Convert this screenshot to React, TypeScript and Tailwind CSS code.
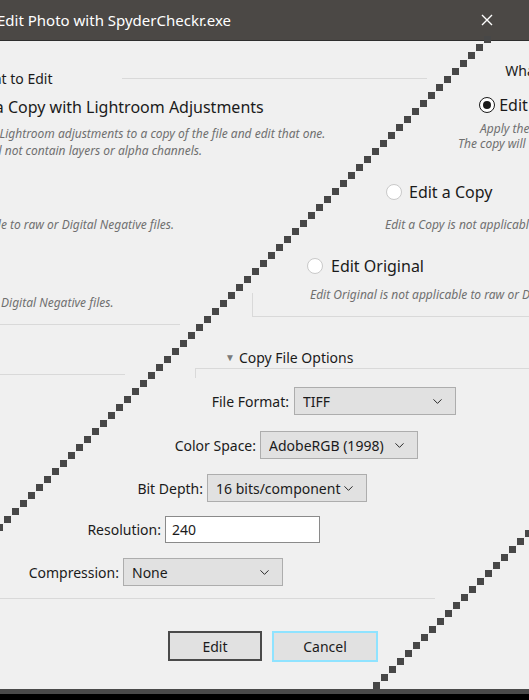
import { ChevronDown } from 'lucide-react'

const font = { fontFamily: '"Noto Sans", "Open Sans", sans-serif' }

function Select({ value, w }: { value: string; w: string }) {
  return (
    <div
      className={`${w} h-[28px] bg-[#e1e1e1] border border-[#adadad] flex items-center pl-[8px] pr-[10px] text-[14px] text-[#1b1b1b]`}
    >
      <span className="flex-1 truncate">{value}</span>
      <ChevronDown size={15} strokeWidth={1.5} />
    </div>
  )
}

function Radio({ on }: { on?: boolean }) {
  return (
    <span
      className={`inline-flex items-center justify-center w-[16px] h-[16px] rounded-full border ${
        on ? 'border-[#1b1b1b] bg-white' : 'border-[#c9c9c9] bg-white'
      }`}
    >
      {on && <span className="w-[8px] h-[8px] rounded-full bg-[#1b1b1b]" />}
    </span>
  )
}

// the diagonal staircase seam across the screenshot
function Seam() {
  const a: { x: number; y: number }[] = []
  for (let y = 40; y <= 532; y += 8) a.push({ x: 528 - y, y })
  for (let y = 534; y <= 686; y += 8) a.push({ x: 1063 - y, y })
  return (
    <svg className="absolute inset-0 pointer-events-none" width={529} height={700}>
      {a.map((p, i) => (
        <rect key={i} x={p.x - 4} y={p.y - 4} width={7} height={7} fill="#474747" />
      ))}
    </svg>
  )
}

export default function App() {
  return (
    <div className="relative w-[529px] h-[700px] bg-[#f0f0f0] overflow-hidden flex flex-col" style={font}>
      {/* Title bar */}
      <div className="h-[41px] bg-[#4b4845] border-b border-[#2e2e2e] flex items-center shrink-0">
        <span className="-ml-[3px] text-[15px] text-white">Edit Photo with SpyderCheckr.exe</span>
        <svg className="ml-auto mr-[36px]" width="12" height="12" viewBox="0 0 12 12">
          <path d="M1 1 L11 11 M11 1 L1 11" stroke="#fff" strokeWidth="1.4" />
        </svg>
      </div>

      {/* What to Edit */}
      <div className="mt-[21px] h-[26px] flex">
        <span className="self-end text-[14px] text-[#1b1b1b] leading-[18px] -ml-[28px]">What to Edit</span>
        <div className="self-end mb-[9px] ml-[70px] w-[305px] h-px bg-[#d9d9d9]" />
        <span className="ml-auto self-start text-[14px] text-[#1b1b1b] leading-[18px] -mr-[28px]">What to</span>
      </div>

      <div className="mt-[9px] h-[20px] flex">
        <span className="-ml-[38px] text-[16px] leading-[20px] text-[#1b1b1b] whitespace-nowrap">
          Edit a Copy with Lightroom Adjustments
        </span>
        <div className="ml-auto -mt-[5px] flex items-center gap-[4px] -mr-[12px]">
          <Radio on />
          <span className="text-[16px] leading-[20px] text-[#1b1b1b]">Edit a</span>
        </div>
      </div>

      <div className="mt-[8px] flex italic text-[12px] text-[#6f6f6f]">
        <div className="leading-[17px] whitespace-nowrap">
          <div className="-ml-[53px]">Apply the Lightroom adjustments to a copy of the file and edit that one.</div>
          <div className="-ml-[66px]">The copy will not contain layers or alpha channels.</div>
        </div>
        <div className="ml-auto -mt-[4px] leading-[15px] whitespace-nowrap w-[71px]">
          <div className="ml-[22px]">Apply the</div>
          <div>The copy will</div>
        </div>
      </div>

      <div className="mt-[23px] h-[20px] flex items-center gap-[7px] pl-[386px]">
        <Radio />
        <span className="text-[16px] text-[#1b1b1b]">Edit a Copy</span>
      </div>

      <div className="mt-[15px] flex italic text-[12px] text-[#6f6f6f] leading-[16px] whitespace-nowrap">
        <div className="w-[385px] shrink-0">
          <div className="-ml-[143px]">Edit a Copy is not applicable to raw or Digital Negative files.</div>
        </div>
        <span>Edit a Copy is not applicable</span>
      </div>

      <div className="mt-[23px] h-[20px] flex items-center gap-[8px] pl-[307px]">
        <Radio />
        <span className="text-[16px] text-[#1b1b1b]">Edit Original</span>
      </div>

      <div className="mt-[11px] h-[24px] flex italic text-[12px] text-[#6f6f6f] leading-[16px] whitespace-nowrap">
        <div className="w-[310px] shrink-0 self-end">
          <div className="-ml-[211px]">Edit Original is not applicable to raw or Digital Negative files.</div>
        </div>
        <span className="self-start">Edit Original is not applicable to raw or Digital</span>
      </div>

      <div className="mt-[-18px] ml-[252px] h-[24px] border-l border-b border-[#d9d9d9]" />
      <div className="mt-[7px] w-[180px] h-px bg-[#d9d9d9]" />

      {/* Copy File Options */}
      <div className="mt-[23px] h-[18px] flex items-center pl-[225px] gap-[4px]">
        <span className="text-[10px] text-[#7a7a7a]">▼</span>
        <span className="text-[14px] text-[#1b1b1b]">Copy File Options</span>
      </div>
      <div className="mt-[2px] ml-[195px] h-[10px] border-l border-t border-[#d9d9d9]" />
      <div className="-mt-[4px] w-[125px] h-px bg-[#d9d9d9]" />

      <div className="mt-[12px] flex items-center">
        <span className="w-[289px] text-right text-[14px] text-[#1b1b1b]">File Format:</span>
        <div className="ml-[5px]">
          <Select value="TIFF" w="w-[162px]" />
        </div>
      </div>
      <div className="mt-[16px] flex items-center">
        <span className="w-[256px] text-right text-[14px] text-[#1b1b1b]">Color Space:</span>
        <div className="ml-[4px]">
          <Select value="AdobeRGB (1998)" w="w-[158px]" />
        </div>
      </div>
      <div className="mt-[15px] flex items-center">
        <span className="w-[203px] text-right text-[14px] text-[#1b1b1b]">Bit Depth:</span>
        <div className="ml-[4px]">
          <Select value="16 bits/component" w="w-[160px]" />
        </div>
      </div>
      <div className="mt-[14px] flex items-center">
        <span className="w-[161px] text-right text-[14px] text-[#1b1b1b]">Resolution:</span>
        <div className="ml-[4px] w-[155px] h-[27px] bg-white border border-[#8a8a8a] flex items-center pl-[6px] text-[14px] text-[#1b1b1b]">
          240
        </div>
      </div>
      <div className="mt-[15px] flex items-center">
        <span className="w-[119px] text-right text-[14px] text-[#1b1b1b]">Compression:</span>
        <div className="ml-[4px]">
          <Select value="None" w="w-[160px]" />
        </div>
      </div>

      <div className="mt-[12px] w-[435px] h-px bg-[#d9d9d9]" />

      {/* Buttons */}
      <div className="mt-[32px] flex gap-[10px] pl-[168px]">
        <button className="w-[94px] h-[30px] bg-[#e1e1e1] border-2 border-[#4a4a4a] text-[14px] text-[#1b1b1b]">
          Edit
        </button>
        <button className="w-[106px] h-[31px] bg-[#e1e1e1] border-2 border-[#8fe3ff] text-[14px] text-[#1b1b1b]">
          Cancel
        </button>
      </div>

      <div className="mt-auto h-[11px] flex flex-col">
        <div className="h-[5px] bg-[#4a4a4a]" />
        <div className="flex-1 bg-black" />
      </div>

      <Seam />
    </div>
  )
}
